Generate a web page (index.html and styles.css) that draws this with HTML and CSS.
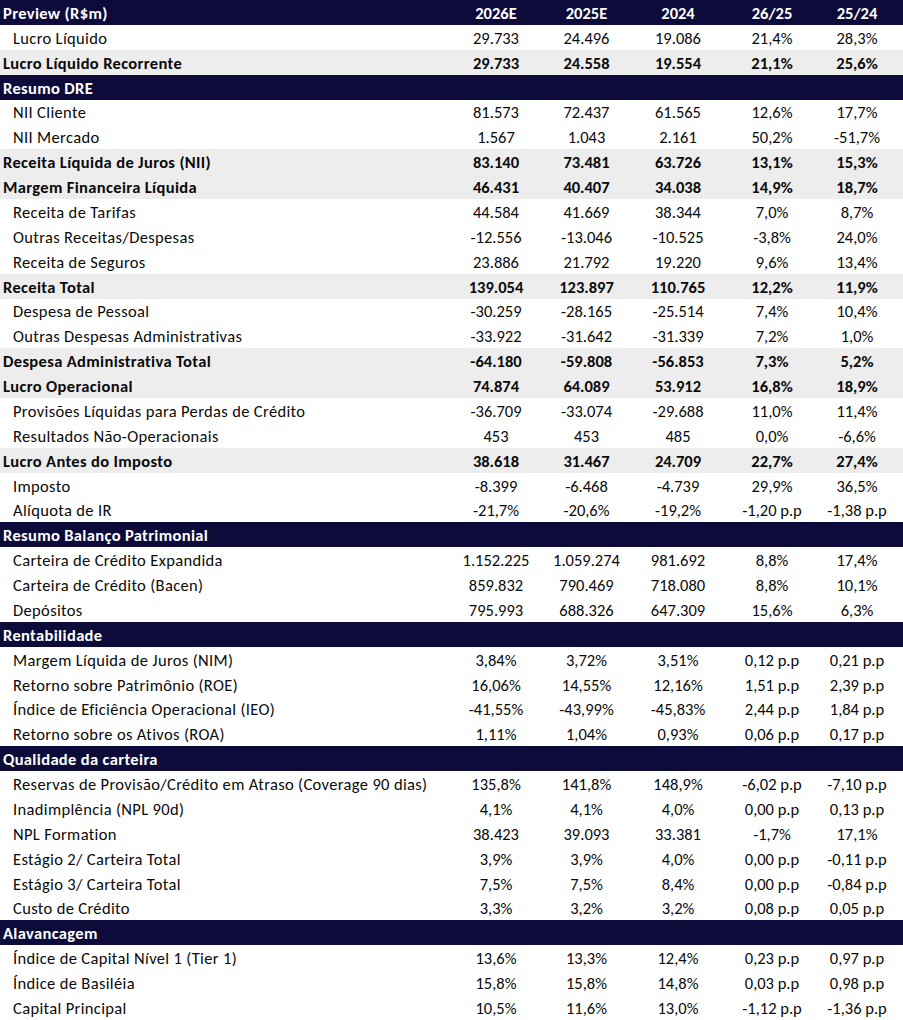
FILE: index.html
```html
<!DOCTYPE html>
<html lang="pt-BR">
<head>
<meta charset="utf-8">
<title>Preview (R$m)</title>
<link rel="stylesheet" href="styles.css">
</head>
<body>
<table class="fin">
<colgroup>
<col class="c-label"><col class="c-a"><col class="c-b"><col class="c-c"><col class="c-d"><col class="c-e">
</colgroup>
<tbody>
<tr class="sec"><td class="lbl">Preview (R$m)</td><td>2026E</td><td>2025E</td><td>2024</td><td>26/25</td><td class="last">25/24</td></tr>
<tr><td class="lbl ind">Lucro Líquido</td><td>29.733</td><td>24.496</td><td>19.086</td><td>21,4%</td><td class="last">28,3%</td></tr>
<tr class="tot"><td class="lbl">Lucro Líquido Recorrente</td><td>29.733</td><td>24.558</td><td>19.554</td><td>21,1%</td><td class="last">25,6%</td></tr>

<tr class="sec"><td class="lbl">Resumo DRE</td><td></td><td></td><td></td><td></td><td class="last"></td></tr>
<tr><td class="lbl ind">NII Cliente</td><td>81.573</td><td>72.437</td><td>61.565</td><td>12,6%</td><td class="last">17,7%</td></tr>
<tr><td class="lbl ind">NII Mercado</td><td>1.567</td><td>1.043</td><td>2.161</td><td>50,2%</td><td class="last">-51,7%</td></tr>
<tr class="tot"><td class="lbl">Receita Líquida de Juros (NII)</td><td>83.140</td><td>73.481</td><td>63.726</td><td>13,1%</td><td class="last">15,3%</td></tr>
<tr class="tot"><td class="lbl">Margem Financeira Líquida</td><td>46.431</td><td>40.407</td><td>34.038</td><td>14,9%</td><td class="last">18,7%</td></tr>
<tr><td class="lbl ind">Receita de Tarifas</td><td>44.584</td><td>41.669</td><td>38.344</td><td>7,0%</td><td class="last">8,7%</td></tr>
<tr><td class="lbl ind">Outras Receitas/Despesas</td><td>-12.556</td><td>-13.046</td><td>-10.525</td><td>-3,8%</td><td class="last">24,0%</td></tr>
<tr><td class="lbl ind">Receita de Seguros</td><td>23.886</td><td>21.792</td><td>19.220</td><td>9,6%</td><td class="last">13,4%</td></tr>
<tr class="tot"><td class="lbl">Receita Total</td><td>139.054</td><td>123.897</td><td>110.765</td><td>12,2%</td><td class="last">11,9%</td></tr>
<tr><td class="lbl ind">Despesa de Pessoal</td><td>-30.259</td><td>-28.165</td><td>-25.514</td><td>7,4%</td><td class="last">10,4%</td></tr>
<tr><td class="lbl ind">Outras Despesas Administrativas</td><td>-33.922</td><td>-31.642</td><td>-31.339</td><td>7,2%</td><td class="last">1,0%</td></tr>
<tr class="tot"><td class="lbl">Despesa Administrativa Total</td><td>-64.180</td><td>-59.808</td><td>-56.853</td><td>7,3%</td><td class="last">5,2%</td></tr>
<tr class="tot"><td class="lbl">Lucro Operacional</td><td>74.874</td><td>64.089</td><td>53.912</td><td>16,8%</td><td class="last">18,9%</td></tr>
<tr><td class="lbl ind">Provisões Líquidas para Perdas de Crédito</td><td>-36.709</td><td>-33.074</td><td>-29.688</td><td>11,0%</td><td class="last">11,4%</td></tr>
<tr><td class="lbl ind">Resultados Não-Operacionais</td><td>453</td><td>453</td><td>485</td><td>0,0%</td><td class="last">-6,6%</td></tr>
<tr class="tot"><td class="lbl">Lucro Antes do Imposto</td><td>38.618</td><td>31.467</td><td>24.709</td><td>22,7%</td><td class="last">27,4%</td></tr>
<tr><td class="lbl ind">Imposto</td><td>-8.399</td><td>-6.468</td><td>-4.739</td><td>29,9%</td><td class="last">36,5%</td></tr>
<tr><td class="lbl ind">Alíquota de IR</td><td>-21,7%</td><td>-20,6%</td><td>-19,2%</td><td>-1,20 p.p</td><td class="last">-1,38 p.p</td></tr>

<tr class="sec"><td class="lbl">Resumo Balanço Patrimonial</td><td></td><td></td><td></td><td></td><td class="last"></td></tr>
<tr><td class="lbl ind">Carteira de Crédito Expandida</td><td>1.152.225</td><td>1.059.274</td><td>981.692</td><td>8,8%</td><td class="last">17,4%</td></tr>
<tr><td class="lbl ind">Carteira de Crédito (Bacen)</td><td>859.832</td><td>790.469</td><td>718.080</td><td>8,8%</td><td class="last">10,1%</td></tr>
<tr><td class="lbl ind">Depósitos</td><td>795.993</td><td>688.326</td><td>647.309</td><td>15,6%</td><td class="last">6,3%</td></tr>

<tr class="sec"><td class="lbl">Rentabilidade</td><td></td><td></td><td></td><td></td><td class="last"></td></tr>
<tr><td class="lbl ind">Margem Líquida de Juros (NIM)</td><td>3,84%</td><td>3,72%</td><td>3,51%</td><td>0,12 p.p</td><td class="last">0,21 p.p</td></tr>
<tr><td class="lbl ind">Retorno sobre Patrimônio (ROE)</td><td>16,06%</td><td>14,55%</td><td>12,16%</td><td>1,51 p.p</td><td class="last">2,39 p.p</td></tr>
<tr><td class="lbl ind">Índice de Eficiência Operacional (IEO)</td><td>-41,55%</td><td>-43,99%</td><td>-45,83%</td><td>2,44 p.p</td><td class="last">1,84 p.p</td></tr>
<tr><td class="lbl ind">Retorno sobre os Ativos (ROA)</td><td>1,11%</td><td>1,04%</td><td>0,93%</td><td>0,06 p.p</td><td class="last">0,17 p.p</td></tr>

<tr class="sec"><td class="lbl">Qualidade da carteira</td><td></td><td></td><td></td><td></td><td class="last"></td></tr>
<tr><td class="lbl ind">Reservas de Provisão/Crédito em Atraso (Coverage 90 dias)</td><td>135,8%</td><td>141,8%</td><td>148,9%</td><td>-6,02 p.p</td><td class="last">-7,10 p.p</td></tr>
<tr><td class="lbl ind">Inadimplência (NPL 90d)</td><td>4,1%</td><td>4,1%</td><td>4,0%</td><td>0,00 p.p</td><td class="last">0,13 p.p</td></tr>
<tr><td class="lbl ind">NPL Formation</td><td>38.423</td><td>39.093</td><td>33.381</td><td>-1,7%</td><td class="last">17,1%</td></tr>
<tr><td class="lbl ind">Estágio 2/ Carteira Total</td><td>3,9%</td><td>3,9%</td><td>4,0%</td><td>0,00 p.p</td><td class="last">-0,11 p.p</td></tr>
<tr><td class="lbl ind">Estágio 3/ Carteira Total</td><td>7,5%</td><td>7,5%</td><td>8,4%</td><td>0,00 p.p</td><td class="last">-0,84 p.p</td></tr>
<tr><td class="lbl ind">Custo de Crédito</td><td>3,3%</td><td>3,2%</td><td>3,2%</td><td>0,08 p.p</td><td class="last">0,05 p.p</td></tr>

<tr class="sec"><td class="lbl">Alavancagem</td><td></td><td></td><td></td><td></td><td class="last"></td></tr>
<tr><td class="lbl ind">Índice de Capital Nível 1 (Tier 1)</td><td>13,6%</td><td>13,3%</td><td>12,4%</td><td>0,23 p.p</td><td class="last">0,97 p.p</td></tr>
<tr><td class="lbl ind">Índice de Basiléia</td><td>15,8%</td><td>15,8%</td><td>14,8%</td><td>0,03 p.p</td><td class="last">0,98 p.p</td></tr>
<tr><td class="lbl ind">Capital Principal</td><td>10,5%</td><td>11,6%</td><td>13,0%</td><td>-1,12 p.p</td><td class="last">-1,36 p.p</td></tr>
</tbody>
</table>
</body>
</html>
```
FILE: styles.css
```css
html, body {
  margin: 0;
  padding: 0;
  background: #ffffff;
}

.fin {
  width: 903px;
  table-layout: fixed;
  border-collapse: collapse;
  border-spacing: 0;
  font-family: Carlito, Lato, "Liberation Sans", sans-serif;
  font-size: 16.5px;
  color: #0a0a0a;
}

.c-label { width: 451px; }
.c-a { width: 90px; }
.c-b { width: 91px; }
.c-c { width: 92px; }
.c-d { width: 96px; }
.c-e { width: 83px; }

.fin tr {
  height: 24.875px;
}

.fin td {
  padding: 1px 0 0 0;
  text-align: center;
  white-space: nowrap;
  line-height: 18px;
  vertical-align: middle;
}

.fin td.lbl {
  text-align: left;
  padding-left: 3px;
  letter-spacing: 0.35px;
}

.fin td.ind {
  padding-left: 13px;
}

.fin td.last {
  padding-right: 9px;
}

.fin tr.sec {
  background: #0d0b3a;
  color: #ffffff;
  font-weight: 700;
}

.fin tr.tot {
  background: #ededed;
  font-weight: 700;
}
```
